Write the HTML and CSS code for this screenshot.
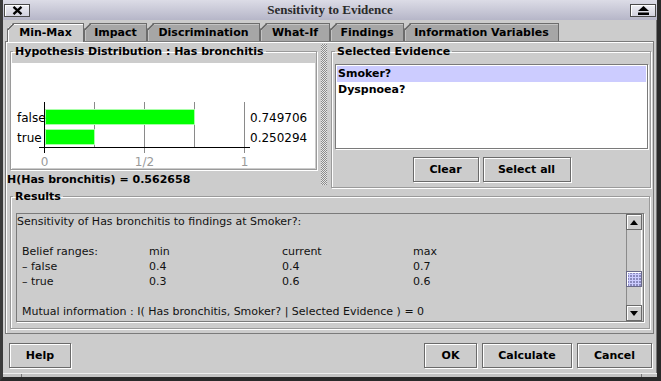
FILE: index.html
```html
<!DOCTYPE html>
<html>
<head>
<meta charset="utf-8">
<title>Sensitivity to Evidence</title>
<link rel="stylesheet" href="styles.css">
</head>
<body>
<div class="window">
  <div class="titlebar">
    <div class="tbtn"><svg width="11" height="9" viewBox="0 0 11 9"><path d="M1.5 0.8 L9.5 8.2 M9.5 0.8 L1.5 8.2" stroke="#000" stroke-width="2.3"/></svg></div>
    <div class="title">Sensitivity to Evidence</div>
    <div class="tbtn"><svg width="11" height="9" viewBox="0 0 11 9"><path d="M5.5 0 L11 5 L0 5 Z" fill="#000"/><rect x="0" y="6.5" width="11" height="2.5" fill="#000"/></svg></div>
  </div>
  <div class="client">
    <div class="tabs">
      <div class="tab active t-minmax">Min-Max</div>
      <div class="tab t-impact">Impact</div>
      <div class="tab t-discr">Discrimination</div>
      <div class="tab t-whatif">What-If</div>
      <div class="tab t-find">Findings</div>
      <div class="tab t-info">Information Variables</div>
    </div>
    <div class="tabpanel">
      <div class="toprow">
        <div class="leftcol">
          <fieldset class="group hyp">
            <legend>Hypothesis Distribution : Has bronchitis</legend>
            <svg class="chart" width="303" height="105" viewBox="0 0 303 105">
              <g stroke="#8a8a8a" stroke-width="1">
                <line x1="82.5" y1="39" x2="82.5" y2="85"/>
                <line x1="132.5" y1="39" x2="132.5" y2="90"/>
                <line x1="182.5" y1="39" x2="182.5" y2="85"/>
                <line x1="232.5" y1="39" x2="232.5" y2="90"/>
              </g>
              <rect x="33.5" y="46.5" width="149" height="15" fill="#00ff00" stroke="#a6ffa6"/>
              <rect x="33.5" y="66.5" width="49" height="15" fill="#00ff00" stroke="#a6ffa6"/>
              <line x1="32.5" y1="39" x2="32.5" y2="90" stroke="#000"/>
              <line x1="27" y1="84.5" x2="238" y2="84.5" stroke="#000"/>
              <g class="chart-text">
                <text x="5" y="59">false</text>
                <text x="5" y="79">true</text>
                <text x="238" y="59">0.749706</text>
                <text x="238" y="79">0.250294</text>
              </g>
              <g class="axis-text">
                <text x="32.5" y="103" text-anchor="middle">0</text>
                <text x="132.5" y="103" text-anchor="middle">1/2</text>
                <text x="232.5" y="103" text-anchor="middle">1</text>
              </g>
            </svg>
          </fieldset>
          <div class="entropy">H(Has bronchitis) = 0.562658</div>
        </div>
        <div class="splitter"></div>
        <fieldset class="group evidence">
          <legend>Selected Evidence</legend>
          <ul class="list">
            <li class="sel">Smoker?</li>
            <li>Dyspnoea?</li>
          </ul>
          <div class="evbtns">
            <button class="btn b-clear">Clear</button>
            <button class="btn b-selall">Select all</button>
          </div>
        </fieldset>
      </div>
      <fieldset class="group results">
        <legend>Results</legend>
        <div class="textarea">
          <div class="rtext">
            <div class="line">Sensitivity of Has bronchitis to findings at Smoker?:</div>
            <div class="line"></div>
            <div class="ranges">
              <span>Belief ranges:</span><span>min</span><span>current</span><span>max</span>
              <span>– false</span><span>0.4</span><span>0.4</span><span>0.7</span>
              <span>– true</span><span>0.3</span><span>0.6</span><span>0.6</span>
            </div>
            <div class="line"></div>
            <div class="line indent">Mutual information : I( Has bronchitis, Smoker? | Selected Evidence ) = 0</div>
          </div>
          <div class="vscroll">
            <div class="sbtn"><svg width="8" height="5" viewBox="0 0 8 5"><path d="M4 0 L8 5 L0 5 Z" fill="#000"/></svg></div>
            <div class="track"><div class="thumb"></div></div>
            <div class="sbtn"><svg width="8" height="5" viewBox="0 0 8 5"><path d="M0 0 L8 0 L4 5 Z" fill="#000"/></svg></div>
          </div>
        </div>
      </fieldset>
    </div>
    <div class="footer">
      <button class="btn b-help">Help</button>
      <div class="spacer"></div>
      <div class="btngroup">
        <button class="btn b-ok">OK</button>
        <button class="btn b-calc">Calculate</button>
        <button class="btn b-cancel">Cancel</button>
      </div>
    </div>
    <div class="frame-bottom"><span class="mark"></span><span class="mark"></span></div>
  </div>
</div>
</body>
</html>
```

FILE: styles.css
```css
* { box-sizing: border-box; }
html, body { margin: 0; padding: 0; }
body {
  width: 661px;
  height: 381px;
  overflow: hidden;
  background: #cccccc;
  font-family: "DejaVu Sans", "Liberation Sans", sans-serif;
  font-size: 11px;
  font-weight: bold;
  color: #000;
}

.window {
  width: 661px;
  height: 381px;
  display: flex;
  flex-direction: column;
  background: #cccccc;
  border-left: 3px solid #3a3a3a;
  border-right: 4px solid #2a2a2a;
  border-bottom: 4px solid #2a2a2a;
}

/* title bar */
.titlebar {
  height: 20px;
  flex: none;
  display: flex;
  align-items: center;
  padding: 0 1px;
  background: linear-gradient(#dcdce6, #b6b6c8);
}
.tbtn {
  width: 26px;
  height: 13px;
  flex: none;
  display: flex;
  align-items: center;
  justify-content: center;
  background: linear-gradient(#eeeef4, #d2d2de);
  border: 1px solid #4a4a4a;
  box-shadow: inset 1px 1px 0 #fff;
}
.title {
  flex: 1;
  text-align: center;
  font-family: "Liberation Serif", serif;
  font-size: 13px;
  font-weight: bold;
  color: #2a2a2a;
}

/* client */
.client {
  flex: 1;
  display: flex;
  flex-direction: column;
  padding: 3px 3px 0 2px;
  box-shadow: inset -1px 0 0 #777;
}

/* tabs */
.tabs {
  display: flex;
  height: 18px;
  padding-left: 2px;
  flex: none;
}
.tab {
  position: relative;
  height: 18px;
  display: flex;
  align-items: center;
  justify-content: center;
  background: #a6a6a6;
  border: 1px solid #6c6c6c;
  border-bottom: none;
  box-shadow: inset 1px 1px 0 #c4c4c4;
  clip-path: polygon(6px 0, 100% 0, 100% 100%, 0 100%, 0 6px);
}
.tab::before {
  content: "";
  position: absolute;
  left: -1px;
  top: -1px;
  width: 8px;
  height: 8px;
  background: linear-gradient(to bottom right, transparent 40%, #6c6c6c 40%, #6c6c6c 54%, transparent 54%);
}
.tab.active {
  z-index: 1;
  height: 19px;
  padding-bottom: 1px;
  background: #cccccc;
  box-shadow: inset 1px 1px 0 #fff;
}
.t-minmax { width: 77px; }
.t-impact { width: 63px; }
.t-discr { width: 113px; }
.t-whatif { width: 70px; }
.t-find { width: 74px; }
.t-info { width: 155px; }

.tabpanel {
  flex: none;
  display: flex;
  flex-direction: column;
  border: 1px solid #7a7a7a;
  box-shadow: inset 1px 1px 0 #fff;
  padding: 3px 2px 4px 0;
}

/* group boxes */
.group {
  margin: 0;
  min-width: 0;
  border: 1px solid #9a9a9a;
  box-shadow: inset 1px 1px 0 #fff, 1px 1px 0 #fff;
  padding: 0 1px;
}
.group legend {
  margin-left: 1px;
  padding: 0 2px;
  line-height: 13px;
  font-size: 11px;
  font-weight: bold;
}

.toprow {
  display: flex;
  height: 143px;
  flex: none;
}
.leftcol {
  width: 314px;
  flex: none;
}
.hyp {
  margin-left: 4px;
  width: 307px;
  padding: 5px 1px 1px 1px;
}
.chart {
  display: block;
  background: #fff;
}
.chart-text text {
  font-family: "DejaVu Sans", sans-serif;
  font-size: 12px;
  font-weight: normal;
  fill: #000;
}
.axis-text text {
  font-family: "DejaVu Sans", sans-serif;
  font-size: 12px;
  font-weight: normal;
  fill: #9a9a9a;
}
.entropy {
  margin-top: 3px;
  padding-left: 1px;
  line-height: 14px;
  white-space: nowrap;
}

.splitter {
  width: 6px;
  height: 141px;
  margin: -1px 4px 0 1px;
  flex: none;
  background-color: #cccccc;
  background-image: repeating-conic-gradient(#8a8a8a 0 25%, #e6e6e6 0 50%);
  background-size: 2px 2px;
}

.evidence {
  width: 320px;
  flex: none;
  padding: 6px 2px 5px 3px;
}
.evidence legend { margin-left: 0; }
.list {
  list-style: none;
  margin: 0;
  padding: 1px 1px 0 1px;
  height: 85px;
  background: #fff;
  border: 1px solid #7a7a7a;
  box-shadow: 1px 1px 0 #fff;
}
.list li {
  height: 16px;
  line-height: 16px;
  padding-left: 1px;
}
.list li.sel { background: #ccccff; }

.evbtns {
  display: flex;
  justify-content: center;
  gap: 4px;
  margin-top: 8px;
}

.btn {
  height: 25px;
  padding: 0;
  margin: 0;
  font-family: "DejaVu Sans", sans-serif;
  font-size: 11px;
  font-weight: bold;
  color: #000;
  background: #cccccc;
  border: 1px solid #6a6a6a;
  border-radius: 0;
  box-shadow: inset 1px 1px 0 #fff, 1px 1px 0 #fff;
}
.b-clear { width: 66px; }
.b-selall { width: 88px; }
.b-help { width: 62px; }
.b-ok { width: 53px; }
.b-calc { width: 90px; }
.b-cancel { width: 75px; }

/* results */
.results {
  margin: 2px 1px 0 4px;
  padding: 10px 1px 6px 1px;
}
.textarea {
  display: flex;
  width: 628px;
  height: 109px;
  margin-left: 4px;
  border: 1px solid #7a7a7a;
  box-shadow: 1px 1px 0 #fff;
  background: #cccccc;
}
.rtext {
  flex: 1;
  font-weight: normal;
  font-size: 11px;
  line-height: 15px;
  white-space: nowrap;
  overflow: hidden;
  color: #111;
}
.line { height: 15px; }
.indent { padding-left: 5px; }
.ranges {
  display: grid;
  grid-template-columns: 127px 133px 131px auto;
  margin-left: 5px;
}

.vscroll {
  width: 16px;
  margin-right: 1px;
  display: flex;
  flex-direction: column;
  flex: none;
}
.sbtn {
  height: 16px;
  flex: none;
  display: flex;
  align-items: center;
  justify-content: center;
  background: #cccccc;
  border: 1px solid #6a6a6a;
  box-shadow: inset 1px 1px 0 #fff;
}
.track {
  flex: 1;
  border-left: 1px solid #8a8a8a;
  border-right: 1px solid #fff;
}
.thumb {
  margin: 41px 0 0 -1px;
  width: 16px;
  height: 16px;
  border: 1px solid #6a6a8a;
  background-color: #ccccff;
  background-image: radial-gradient(circle at 1px 1px, #8888bb 0.7px, transparent 0.9px);
  background-size: 3px 3px;
  box-shadow: inset 1px 1px 0 #fff;
}

/* footer */
.footer {
  flex: 1;
  display: flex;
  align-items: flex-start;
  padding: 9px 2px 0 4px;
}
.spacer { flex: 1; }
.btngroup {
  display: flex;
  gap: 5px;
}

.frame-bottom {
  height: 4px;
  flex: none;
  margin: 0 -3px 0 -2px;
  display: flex;
  justify-content: space-between;
  padding: 0 15px 0 18px;
  border-top: 1px solid #eeeeee;
  background: #c4c4c4;
}
.mark {
  width: 1px;
  background: #777;
}
```
